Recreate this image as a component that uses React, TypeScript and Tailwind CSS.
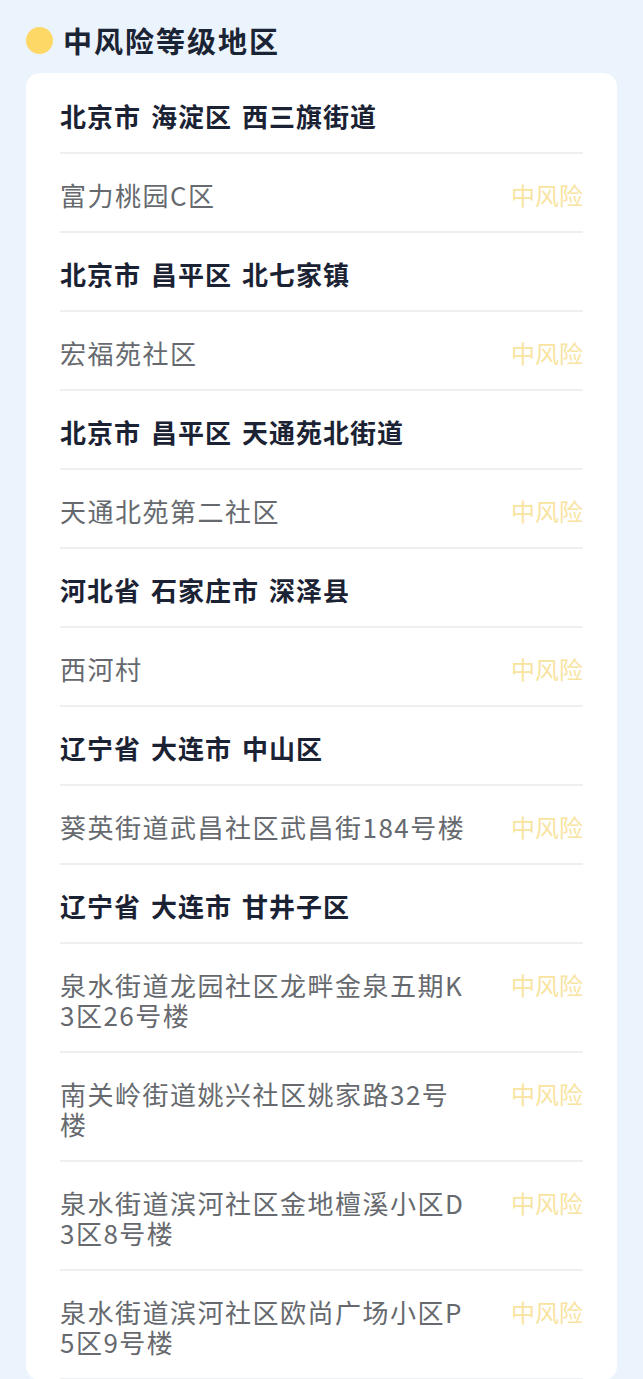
import React from "react";

type Row =
  | { kind: "head"; parts: string[] }
  | { kind: "item"; lines: string[] };

const rows: Row[] = [
  { kind: "head", parts: ["北京市", "海淀区", "西三旗街道"] },
  { kind: "item", lines: ["富力桃园C区"] },
  { kind: "head", parts: ["北京市", "昌平区", "北七家镇"] },
  { kind: "item", lines: ["宏福苑社区"] },
  { kind: "head", parts: ["北京市", "昌平区", "天通苑北街道"] },
  { kind: "item", lines: ["天通北苑第二社区"] },
  { kind: "head", parts: ["河北省", "石家庄市", "深泽县"] },
  { kind: "item", lines: ["西河村"] },
  { kind: "head", parts: ["辽宁省", "大连市", "中山区"] },
  { kind: "item", lines: ["葵英街道武昌社区武昌街184号楼"] },
  { kind: "head", parts: ["辽宁省", "大连市", "甘井子区"] },
  { kind: "item", lines: ["泉水街道龙园社区龙畔金泉五期K", "3区26号楼"] },
  { kind: "item", lines: ["南关岭街道姚兴社区姚家路32号", "楼"] },
  { kind: "item", lines: ["泉水街道滨河社区金地檀溪小区D", "3区8号楼"] },
  { kind: "item", lines: ["泉水街道滨河社区欧尚广场小区P", "5区9号楼"] },
];

const font = { fontFamily: '"PingFang SC", "Noto Sans CJK SC", "Noto Sans", sans-serif' };

export default function App() {
  return (
    <div
      className="min-h-[1379px] w-[643px] bg-[#ebf3fc] pl-[26px] pr-[26px] pt-[22px]"
      style={font}
    >
      {/* Title */}
      <div className="flex h-[36px] items-center gap-[10px]">
        <span className="h-[27px] w-[27px] rounded-full bg-[#fdd866]" />
        <h1 className="text-[29px] font-bold leading-none tracking-[2px] text-[#1b2434]">
          中风险等级地区
        </h1>
      </div>

      {/* Card */}
      <div className="mt-[15px] rounded-[14px] bg-white px-[34px] pt-[2px]">
        {rows.map((row, i) => (
          <div
            key={i}
            className="flex items-start justify-between border-b-2 border-[#eeeff1] pb-[21px] pt-[26px]"
          >
            {row.kind === "head" ? (
              <div className="flex gap-[10px] text-[26px] font-bold leading-[30px] tracking-[1px] text-[#1a2233]">
                {row.parts.map((p) => (
                  <span key={p}>{p}</span>
                ))}
              </div>
            ) : (
              <>
                <div className="text-[26px] leading-[30px] tracking-[1.5px] text-[#66696e]">
                  {row.lines.map((l, j) => (
                    <div key={j}>{l}</div>
                  ))}
                </div>
                <span className="text-[24px] leading-[30px] text-[#f8e4a0]">中风险</span>
              </>
            )}
          </div>
        ))}
      </div>
    </div>
  );
}
